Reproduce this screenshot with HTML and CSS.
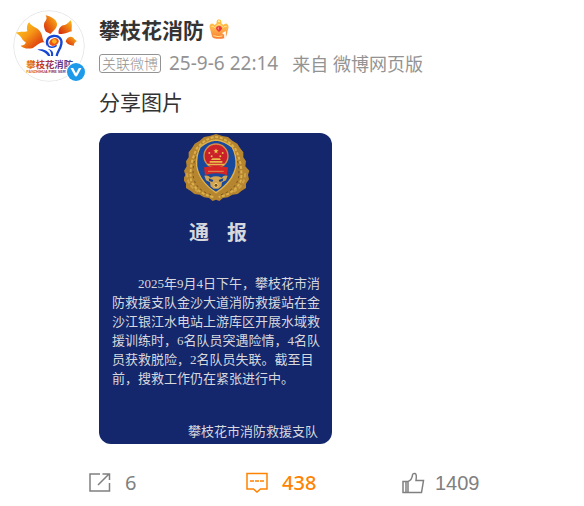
FILE: index.html
```
<!DOCTYPE html>
<html lang="zh-CN">
<head>
  <meta charset="UTF-8" />
  <meta name="viewport" content="width=device-width, initial-scale=1.0"/>
  <title>攀枝花消防的微博</title>
  <link rel="stylesheet" href="styles.css">
</head>
<body>
  <article class="post">
    <div class="post-main">
      <a class="avatar" href="#" aria-label="攀枝花消防">
        <svg class="avatar-logo" viewBox="39 30 216 216">
          <defs>
            <linearGradient id="petal" x1="0" y1="0" x2="1" y2="1">
              <stop offset="0" stop-color="#ffd21c"/>
              <stop offset=".45" stop-color="#f79a16"/>
              <stop offset="1" stop-color="#d4180c"/>
            </linearGradient>
            <linearGradient id="petal2" x1="0" y1="1" x2="1" y2="0">
              <stop offset="0" stop-color="#d4200e"/>
              <stop offset="1" stop-color="#ffc018"/>
            </linearGradient>
            <linearGradient id="brand" x1="0" x2="1">
              <stop offset="0" stop-color="#e8851a"/>
              <stop offset=".3" stop-color="#c83822"/>
              <stop offset=".65" stop-color="#7a3473"/>
              <stop offset="1" stop-color="#3547a8"/>
            </linearGradient>
          </defs>
          <circle cx="147" cy="138" r="106" fill="#fff" stroke="#e6e6e6" stroke-width="3"/>
          <path fill="url(#petal)" d="M47 98C65 94 73 97 82 94C80 84 80 73 88 67C94 82 111 80 121 95C129 108 126 118 134 128C123 124 115 134 99 144C82 148 68 144 62 137C72 136 78 132 77 126C66 123 65 106 47 98Z"/>
          <path fill="url(#petal2)" d="M138 95C130 82 130 69 137 62C142 56 139 50 137 46C153 48 174 61 171 76C169 87 160 93 151 102C147 98 142 98 138 95Z"/>
          <path fill="url(#petal2)" d="M176 101C174 87 181 76 194 75C203 73 208 64 212 61C219 76 213 88 216 94C205 95 193 106 176 101Z"/>
          <path fill="url(#petal2)" d="M197 124C200 112 212 106 220 113C224 118 227 121 231 123C225 126 222 129 221 137C211 137 201 133 197 124Z"/>
          <path fill="none" stroke="#1646d2" stroke-width="7" d="M143 136C137 122 144 110 160 108C177 106 187 118 184 132C181 149 172 154 170 168"/>
          <path fill="none" stroke="#1646d2" stroke-width="5" d="M143 136C150 145 162 142 170 136"/>
          <ellipse cx="162" cy="126" rx="15" ry="11" fill="#ee5417" transform="rotate(-25 162 126)"/>
          <circle cx="163" cy="124" r="7" fill="#ffb11b"/>
          <path fill="#1646d2" d="M112 149C129 145 147 152 151 168H144C138 157 126 153 112 149ZM143 146C156 149 162 156 159 168H153C155 157 151 151 143 146Z"/>
          <text class="logo-name" x="79" y="203" fill="url(#brand)">攀枝花消防</text>
          <text class="logo-sub" x="79" y="220" fill="url(#brand)">PANZHIHUA FIRE SERV</text>
        </svg>
        <svg class="verified" viewBox="0 0 20 20">
          <circle cx="10" cy="10" r="10" fill="#fff"/>
          <circle cx="10" cy="10" r="9" fill="#1d9bea"/>
          <path fill="#fff" d="M4.500 6H7.200L10 11.200 12.800 6H15.500L11.400 13.500Q10 15.500 8.600 13.500Z"/>
        </svg>
      </a>

      <div class="content">
        <header class="name-row">
          <a class="name" href="#">攀枝花消防</a>
          <svg class="crown" viewBox="0 0 60 60">
            <defs>
              <linearGradient id="gold" x1="0" y1="0" x2="0" y2="1">
                <stop offset="0" stop-color="#ffc53d"/>
                <stop offset=".5" stop-color="#ffb14a"/>
                <stop offset="1" stop-color="#f97a34"/>
              </linearGradient>
            </defs>
            <path fill="url(#gold)" d="M6 14Q-1 20 3 29L9 52Q10 57 15 58Q30 61 46 58Q51 56 52 51L58 28Q60 19 54 14Q48 12 43 18L37 13Q39 2 30 1Q21 2 23 13L17 18Q12 12 6 14Z"/>
            <path fill="none" stroke="#ffe38a" stroke-width="3" d="M7 23Q12 19 17 26Q23 17 30 16Q38 17 43 26Q48 19 53 23M13 50Q28 55 40 51"/>
            <circle cx="30" cy="7" r="3" fill="#fff0a2"/>
            <path fill="#e83a3a" d="M21 28Q22 21 30 21Q38 21 39 28Q38 35 30 39Q22 35 21 28Z"/>
            <path fill="#ff8f85" d="M25 28L30 23V33Z"/>
            <path fill="none" stroke="#fff" stroke-width="5" d="M41 44L48 40V57"/>
          </svg>
        </header>

        <div class="meta">
          <span class="tag">关联微博</span>
          <a class="time" href="#">25-9-6 22:14</a>
          <span class="source">来自 <a href="#">微博网页版</a></span>
        </div>

        <p class="text">分享图片</p>

        <section class="notice">
          <svg class="emblem" viewBox="45 24 204 210">
            <path fill="#b5852f" d="M141 27L160 33 177 36 190 47 205 56 213 69 223 82 223 97 231 109 229 124 241 137 237 150 240 163 231 176 231 189 217 198 206 207 190 209 177 217 162 219 151 228 141 224 131 228 120 219 105 217 92 209 76 207 65 198 51 189 51 176 42 163 49 150 45 137 53 124 51 109 59 97 59 82 69 69 77 56 92 47 105 36 122 33Z"/>
            <path fill="none" stroke="#dcb04d" stroke-width="6" stroke-dasharray="9 5" d="M133 216Q80 204 66 165Q60 118 84 69Q112 38 141 36Q170 38 198 69Q222 118 216 165Q202 204 149 216"/>
            <path fill="none" stroke="#7d5720" stroke-width="3" stroke-dasharray="7 8" d="M126 209Q84 196 74 161Q67 118 90 73M156 209Q198 196 208 161Q215 118 192 73"/>
            <path fill="none" stroke="#cfa044" stroke-width="6" stroke-dasharray="12 7" d="M54 145Q54 186 94 202M228 145Q228 186 188 202"/>
            <path fill="#19499c" stroke="#dfb24c" stroke-width="4" d="M141 45Q114 48 93 67Q81 91 83 123Q91 170 141 203Q192 170 201 123Q203 91 190 67Q168 48 141 45Z"/>
            <circle cx="141" cy="93" r="36" fill="#c9202a" stroke="#d98f46" stroke-width="4"/>
            <path fill="#f1c84f" d="M141 70L143 76H149L144 80 146 86 141 82 136 86 138 80 133 76H139Z"/>
            <g fill="#eab94a">
              <circle cx="121" cy="84" r="3"/><circle cx="128" cy="94" r="3"/>
              <circle cx="154" cy="94" r="3"/><circle cx="161" cy="84" r="3"/>
              <path d="M126 105L130 100H152L156 105ZM122 108H160V113H122ZM116 116H166V121H116Z"/>
            </g>
            <path fill="#d52525" d="M105 127Q141 120 177 127L174 150Q141 140 108 150Z"/>
            <path fill="none" stroke="#dc8f4f" stroke-width="3" d="M117 139H164"/>
            <path fill="#d2a451" d="M106 152Q118 149 124 158Q141 150 158 158Q164 149 176 152L171 166 159 172 157 184 148 191H134L125 184 123 172 111 166Z"/>
            <path fill="#18448f" d="M119 160L133 165 130 171 121 168ZM149 165L163 160 161 168 152 171Z"/>
            <circle cx="141" cy="181" r="6" fill="#775321" stroke="#f0d080" stroke-width="3"/>
          </svg>
          <h2 class="notice-title"><span>通</span><span>报</span></h2>
          <p class="notice-body">2025年9月4日下午，攀枝花市消防救援支队金沙大道消防救援站在金沙江银江水电站上游库区开展水域救援训练时，6名队员突遇险情，4名队员获救脱险，2名队员失联。截至目前，搜救工作仍在紧张进行中。</p>
          <p class="notice-sign">攀枝花市消防救援支队</p>
        </section>
      </div>
    </div>

    <footer class="actions">
      <button class="action" type="button" aria-label="转发 6">
        <svg viewBox="0 0 23 22"><path d="M12 2H2V19H21.500V11M10 13L21 2M14.500 2H21.500V8"/></svg>
        <span>6</span>
      </button>
      <button class="action action-comment" type="button" aria-label="评论 438">
        <svg viewBox="0 0 23 22"><path d="M2 1.500H22V17H15.500L12 20 8.500 17H2Z"/><path stroke-dasharray="4 1" d="M5 9H19"/></svg>
        <span>438</span>
      </button>
      <button class="action action-like" type="button" aria-label="赞 1409">
        <svg viewBox="0 0 23 22"><path d="M1 9.500H6V20.500H1ZM6 9.500Q10 8 10.500 3Q11 1 13 1.500Q15 2 14 8.500H21.500L19.500 20.500H6M4 9.500V20.500"/></svg>
        <span>1409</span>
      </button>
    </footer>
  </article>
</body>
</html>
```
FILE: styles.css
```
* {
  box-sizing: border-box;
}

body {
  margin: 0;
  background-color: #fff;
  color: #333;
  font-family: "Noto Sans", "Noto Sans CJK SC", sans-serif;
}

a {
  color: inherit;
  text-decoration: none;
}

.post {
  padding: 10px 0;
}

.post-main {
  display: flex;
  align-items: flex-start;
  gap: 14px;
  padding: 0 13px;
}

.avatar {
  position: relative;
  flex: none;
  width: 72px;
  height: 72px;
}

.avatar-logo {
  display: block;
  width: 100%;
  border-radius: 50%;
}

.logo-name {
  font-family: "Noto Sans CJK SC", sans-serif;
  font-size: 28px;
  font-weight: bold;
}

.logo-sub {
  font-family: "Liberation Sans", sans-serif;
  font-size: 11px;
  font-weight: bold;
}

/* sits on the avatar's corner */
.verified {
  position: absolute;
  right: -1px;
  bottom: 0;
  width: 20px;
  height: 20px;
}

.content {
  flex: 1;
  min-width: 0;
}

.name-row {
  display: flex;
  align-items: center;
  gap: 5px;
  height: 38px;
}

.name {
  font-family: "Noto Sans CJK SC", sans-serif;
  font-size: 21px;
  font-weight: bold;
}

.crown {
  width: 20px;
  height: 20px;
}

.meta {
  display: flex;
  align-items: center;
  height: 30px;
  color: #939393;
  font-size: 18px;
  font-weight: 300;
  white-space: nowrap;
}

.tag {
  padding: 0 2px;
  border: 1px solid #939393;
  border-radius: 3px;
  font-size: 14px;
  line-height: 17px;
}

.time {
  margin-left: 8px;
  font-size: 19px;
  font-weight: 400;
}

.source {
  margin-left: 14px;
  font-weight: 400;
}

.text {
  margin: 8px 0 17px;
  font-family: "Noto Sans CJK SC", sans-serif;
  font-size: 21px;
  line-height: 30px;
}

.notice {
  width: 233px;
  max-width: 100%;
  padding: 0 8px 4px 13px;
  border-radius: 12px;
  background-color: #14266c;
  color: #d6d8de;
}

.emblem {
  display: block;
  width: 68px;
  height: 70px;
  margin: 0 auto;
}

.notice-title {
  display: flex;
  justify-content: center;
  gap: 18px;
  margin: 15px 0 26px;
  font-family: "Liberation Serif", "Noto Sans CJK SC", serif;
  font-size: 20px;
  line-height: 30px;
}

.notice-body {
  margin: 0;
  font-family: "Liberation Serif", "Noto Sans CJK SC", serif;
  font-size: 13px;
  line-height: 19px;
  text-indent: 2em;
}

.notice-sign {
  margin: 33px 0 0;
  padding-right: 6px;
  font-family: "Noto Sans CJK SC", sans-serif;
  font-size: 13px;
  line-height: 19px;
  text-align: right;
}

.actions {
  display: grid;
  grid-template-columns: repeat(3, 1fr);
  padding: 24px 25px 0 88px;
}

.action {
  display: flex;
  align-items: center;
  gap: 14px;
  padding: 0;
  border: none;
  background: none;
  color: #808080;
  font-family: "Noto Sans", sans-serif;
  font-size: 20px;
  line-height: 30px;
  cursor: pointer;
}

.action svg {
  width: 23px;
  height: 22px;
  fill: none;
  stroke: currentColor;
  stroke-width: 1.5;
}

.action-comment {
  color: #ff8200;
}

.action-comment span {
  font-weight: 500;
}

.action-like {
  gap: 10px;
  font-family: "Liberation Sans", sans-serif;
}
```
